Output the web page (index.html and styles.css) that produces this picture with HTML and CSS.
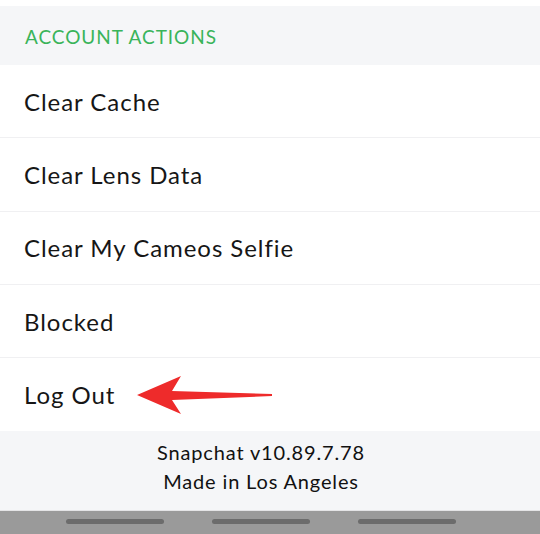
FILE: index.html
```html
<!DOCTYPE html>
<html lang="en">
<head>
  <meta charset="UTF-8" />
  <title>Settings - Account Actions</title>
  <meta name="viewport" content="width=device-width, initial-scale=1.0" />
  <link rel="stylesheet" href="styles.css">
</head>
<body>

<div class="screen">
  <div class="section-header">ACCOUNT ACTIONS</div>

  <ul class="action-list">
    <li class="action-row">Clear Cache</li>
    <li class="action-row">Clear Lens Data</li>
    <li class="action-row">Clear My Cameos Selfie</li>
    <li class="action-row">Blocked</li>
    <li class="action-row">
      <span>Log Out</span>
      <!-- annotation arrow pointing at Log Out -->
      <svg class="pointer-arrow" width="140" height="44" viewBox="0 0 140 44">
        <path d="M1 19 L45 0 L36 15 L136 18 L136 20 L36 24 L45 38 Z" fill="#ee2b2b" />
      </svg>
    </li>
  </ul>

  <div class="app-footer">
    <div>Snapchat v10.89.7.78</div>
    <div>Made in Los Angeles</div>
  </div>

  <div class="nav-bar">
    <span class="nav-pill"></span>
    <span class="nav-pill"></span>
    <span class="nav-pill"></span>
  </div>
</div>

</body>
</html>
```

FILE: styles.css
```css
body {
  margin: 0;
  background: #fff;
  font-family: Lato, 'Noto Sans', sans-serif;
  color: #161616;
}

.screen {
  width: 540px;
  height: 534px;
  display: flex;
  flex-direction: column;
  padding-top: 6px;
  box-sizing: border-box;
  overflow: hidden;
}

.section-header {
  height: 59px;
  flex-shrink: 0;
  background: #f5f6f8;
  color: #3ab45a;
  font-size: 19px;
  letter-spacing: 0.95px;
  display: flex;
  align-items: center;
  padding: 2px 25px 0;
  box-sizing: border-box;
}

.action-list {
  list-style: none;
  margin: 0;
  padding: 0;
  flex-shrink: 0;
}

.action-row {
  height: 73.3px;
  border-bottom: 1px solid #f0f0f2;
  box-sizing: border-box;
  padding: 0 25px 0 24px;
  font-size: 24px;
  letter-spacing: 0.95px;
  display: flex;
  align-items: center;
  position: relative;
}

.action-row:last-child {
  border-bottom: none;
}

.pointer-arrow {
  position: absolute;
  left: 136px;
  top: 18px;
}

.app-footer {
  height: 80px;
  flex-shrink: 0;
  background: #f5f6f8;
  border-bottom: 1px solid #e4e4e6;
  display: flex;
  flex-direction: column;
  align-items: center;
  justify-content: center;
  font-size: 20px;
  letter-spacing: 0.85px;
  line-height: 29px;
  color: #111;
  padding: 0 18px 8px 0;
  box-sizing: border-box;
}

.nav-bar {
  flex: 1;
  background: #9a9a9a;
  display: flex;
  justify-content: center;
  align-items: center;
  gap: 48px;
  padding: 0 18px 2px 0;
}

.nav-pill {
  width: 98px;
  height: 5px;
  border-radius: 3px;
  background: #6c6c6c;
}
```
